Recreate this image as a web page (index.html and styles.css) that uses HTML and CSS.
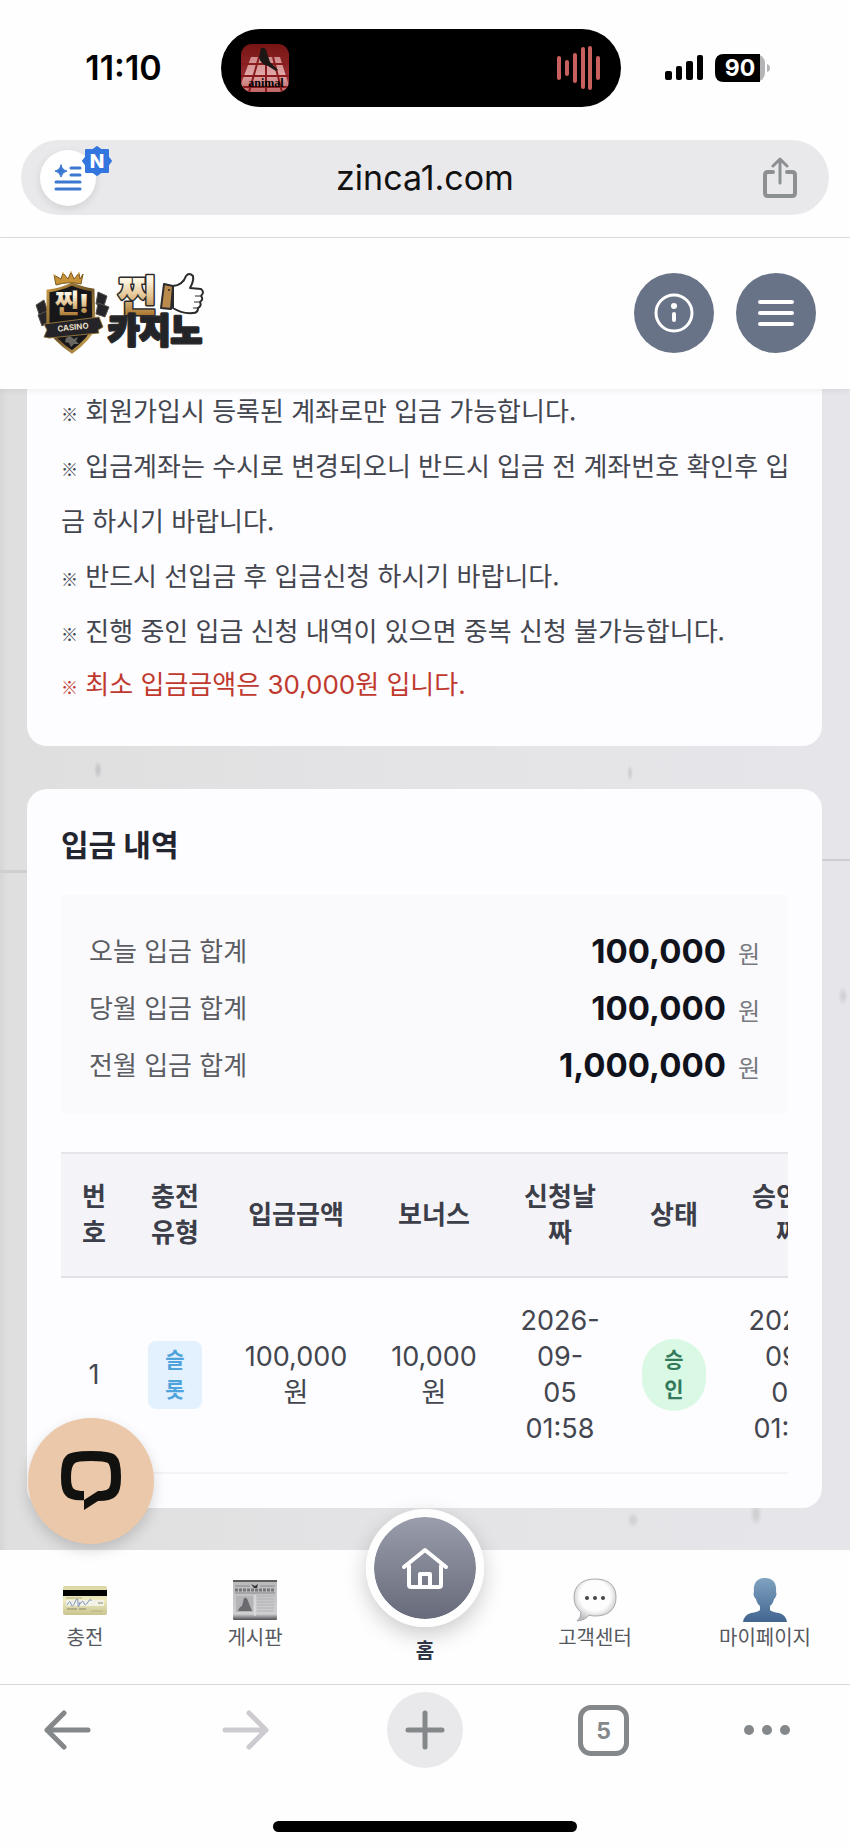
FILE: index.html
```html
<!DOCTYPE html>
<html lang="ko">
<head>
    <meta charset="UTF-8">
    <meta name="viewport" content="width=device-width, initial-scale=1.0">
    <title>입금 내역</title>
    <link rel="stylesheet" href="styles.css">
</head>
<body>
    <div class="status-bar">
        <div class="status-time">11:10</div>
        <div class="island">
            <svg width="48" height="48" viewBox="0 0 48 48">
                <defs>
                    <linearGradient id="cover" x1="0" y1="0" x2="0" y2="1">
                        <stop offset="0" stop-color="#761414"/>
                        <stop offset="1" stop-color="#a83a3c"/>
                    </linearGradient>
                    <linearGradient id="tiles" x1="0" y1="0" x2="0" y2="1">
                        <stop offset="0" stop-color="#cf8a8a"/>
                        <stop offset="0.5" stop-color="#e0a6a6"/>
                        <stop offset="1" stop-color="#c06466"/>
                    </linearGradient>
                    <clipPath id="coverClip"><rect width="48" height="48" rx="11"/></clipPath>
                </defs>
                <g clip-path="url(#coverClip)">
                    <rect width="48" height="48" fill="url(#cover)"/>
                    <path d="M10 13H39L50 48H-3Z" fill="url(#tiles)"/>
                    <path d="M0 20H48M0 32H48M0 43H48M18 13L8 48M25 13V48M32 13L41 48" stroke="#8a1c1e" stroke-width="2" fill="none"/>
                    <path d="M20 4q5-1 6 5l3 9 8 8-2 1-8-5q-8-2-9-9z" fill="#1c1614"/>
                    <text class="cover-text" x="25" y="43" text-anchor="middle">animal</text>
                </g>
            </svg>
            <svg width="44" height="46" viewBox="0 0 44 46" stroke="#c8605d" stroke-width="4" stroke-linecap="round">
                <path d="M2 13V33M10 17V29M18 10V36M26 4V42M33 3V43M41 13V33"/>
            </svg>
        </div>
        <div class="status-icons">
            <svg width="40" height="26" viewBox="0 0 40 26">
                <rect x="0" y="16" width="7" height="9" rx="2"/>
                <rect x="11" y="11" width="6" height="14" rx="2"/>
                <rect x="21" y="6" width="7" height="19" rx="2"/>
                <rect x="32" y="0" width="6" height="25" rx="2"/>
            </svg>
            <svg width="56" height="28" viewBox="0 0 56 28">
                <rect width="50" height="28" rx="9" fill="#b4b4b6"/>
                <path d="M9 0H45V28H9Q0 28 0 19V9Q0 0 9 0Z"/>
                <path d="M52 10Q55 11 55 14Q55 17 52 18Z" fill="#b4b4b6"/>
                <text class="battery-text" x="25" y="22" text-anchor="middle">90</text>
            </svg>
        </div>
    </div>

    <div class="address-row">
        <div class="address-bar">
            <button class="reader-button" aria-label="읽기 모드">
                <svg width="28" height="28" viewBox="0 0 28 28" fill="none" stroke="#3c78cf" stroke-width="3" stroke-linecap="round">
                    <path d="M17 4H26M17 11H26M2 18H26M2 25H26"/>
                    <path d="M7 1Q8 6 13 7Q8 8 7 13Q6 8 1 7Q6 6 7 1Z" fill="#3c78cf" stroke="#3c78cf" stroke-width="1"/>
                </svg>
                <svg class="new-badge" width="30" height="30" viewBox="0 0 30 30">
                    <path d="M15 1L19 4H26V11L29 15L26 19V26H19L15 29L11 26H4V19L1 15L4 11V4H11Z" fill="#3376e0" stroke="#3376e0" stroke-width="2" stroke-linejoin="round"/>
                    <text x="15" y="22" text-anchor="middle">N</text>
                </svg>
            </button>
            <span class="address-text">zinca1.com</span>
            <button class="share-button" aria-label="공유">
                <svg width="36" height="42" viewBox="0 0 36 42" fill="none" stroke="#8d9093" stroke-width="4" stroke-linecap="round" stroke-linejoin="round">
                    <path d="M11 15H6Q3 15 3 18V36Q3 39 6 39H30Q33 39 33 36V18Q33 15 30 15H25"/>
                    <path d="M18 26V3M11 9L18 2L25 9" stroke-width="3"/>
                </svg>
            </button>
        </div>
    </div>

    <header class="site-header">
        <a href="#" class="logo" aria-label="찐카지노">
            <svg width="170" height="84" viewBox="0 0 170 84">
                <defs>
                    <linearGradient id="gold" x1="0" y1="0" x2="0" y2="1">
                        <stop offset="0.2" stop-color="#fff6e2"/>
                        <stop offset="0.5" stop-color="#e3c594"/>
                        <stop offset="0.9" stop-color="#a8742c"/>
                    </linearGradient>
                    <linearGradient id="rim" x1="0" y1="0" x2="1" y2="1">
                        <stop offset="0" stop-color="#c99b45"/>
                        <stop offset="0.5" stop-color="#6f5325"/>
                        <stop offset="1" stop-color="#e0b860"/>
                    </linearGradient>
                </defs>
                <g fill="#26262a" stroke="#57534c">
                    <path d="M1 34L9 29L14 44L6 49Z"/>
                    <path d="M3 44L12 40V52L7 55Z"/>
                    <path d="M63 21L72 25L69 35L61 33Z"/>
                    <path d="M63 32L74 36L70 46L61 43Z"/>
                </g>
                <path d="M37 13Q49 18 58 19L59 56Q55 68 37 81Q18 68 13 56V20Q27 18 37 13Z" fill="#17171a" stroke="url(#rim)" stroke-width="3"/>
                <path d="M21 14L19 4L26 8L28 2L33 8L36 1L39 8L44 2L45 8L48 3L46 13Q34 10 21 14Z" fill="#c89239" stroke="#7c5a20"/>
                <g fill="#e9c97d"><circle cx="19" cy="4" r="1"/><circle cx="28" cy="2" r="1"/><circle cx="36" cy="1" r="1"/><circle cx="44" cy="2" r="1"/></g>
                <text class="logo-shield" x="37" y="42" text-anchor="middle">찐!</text>
                <path d="M9 53L64 46L68 56L63 59L64 62L14 67L9 66L12 59Z" fill="#242327" stroke="#8d713c"/>
                <text class="logo-casino" x="38" y="59" text-anchor="middle" transform="rotate(-6 38 57)">CASINO</text>
                <path d="M31 67l4-2 4 3 4-2-2 4 3 3-5 0-3 3-2-4-4-1z" fill="#696762"/>
                <text class="logo-word-gold" x="102" y="40" text-anchor="middle">찐</text>
                <path d="M138 15Q148 14 151 5Q154 1 158 5Q159 10 155 17L166 18Q170 21 166 25Q169 28 165 31Q167 35 163 37Q163 42 158 42Q147 43 138 37Z" fill="#fff" stroke="#2b2b2d" stroke-width="2" stroke-linejoin="round"/>
                <path d="M160 25h5M159 31h5M158 37h4" stroke="#2b2b2d"/>
                <path d="M129 13L138 15L136 38L126 37Z" fill="#bb8b4d" stroke="#2b2b2d" stroke-width="2" stroke-linejoin="round"/>
                <circle cx="134" cy="19" r="1" fill="#222"/>
                <text class="logo-word" x="120" y="72" text-anchor="middle">카지노</text>
            </svg>
        </a>
        <div class="header-buttons">
            <button class="round-button" aria-label="안내">
                <svg width="40" height="40" viewBox="0 0 40 40" fill="none" stroke="#fff" stroke-width="3" stroke-linecap="round">
                    <circle cx="20" cy="20" r="18"/>
                    <path d="M20 21V27" stroke-width="4"/>
                    <circle cx="20" cy="13" r="3" fill="#fff" stroke="none"/>
                </svg>
            </button>
            <button class="round-button" aria-label="메뉴">
                <svg width="36" height="26" viewBox="0 0 36 26" stroke="#fff" stroke-width="4" stroke-linecap="round">
                    <path d="M2 2H34M2 13H34M2 24H34"/>
                </svg>
            </button>
        </div>
    </header>

    <main class="content">
        <section class="card notes">
            <p><span class="mark">※</span> 회원가입시 등록된 계좌로만 입금 가능합니다.</p>
            <p><span class="mark">※</span> 입금계좌는 수시로 변경되오니 반드시 입금 전 계좌번호 확인후 입금 하시기 바랍니다.</p>
            <p><span class="mark">※</span> 반드시 선입금 후 입금신청 하시기 바랍니다.</p>
            <p><span class="mark">※</span> 진행 중인 입금 신청 내역이 있으면 중복 신청 불가능합니다.</p>
            <p class="warning"><span class="mark">※</span> 최소 입금금액은 30,000원 입니다.</p>
        </section>

        <section class="card history">
            <h2>입금 내역</h2>
            <dl class="summary">
                <div class="summary-row"><dt>오늘 입금 합계</dt><dd>100,000 <span>원</span></dd></div>
                <div class="summary-row"><dt>당월 입금 합계</dt><dd>100,000 <span>원</span></dd></div>
                <div class="summary-row"><dt>전월 입금 합계</dt><dd>1,000,000 <span>원</span></dd></div>
            </dl>
            <div class="table-scroll">
                <table>
                    <colgroup>
                        <col class="col-no"><col class="col-type"><col class="col-amount"><col class="col-bonus">
                        <col class="col-date"><col class="col-state"><col class="col-date">
                    </colgroup>
                    <thead>
                        <tr>
                            <th>번호</th>
                            <th>충전<br>유형</th>
                            <th>입금금액</th>
                            <th>보너스</th>
                            <th>신청날짜</th>
                            <th>상태</th>
                            <th>승인날짜</th>
                        </tr>
                    </thead>
                    <tbody>
                        <tr>
                            <td>1</td>
                            <td><span class="tag">슬<br>롯</span></td>
                            <td>100,000<br>원</td>
                            <td>10,000<br>원</td>
                            <td>2026-<br>09-<br>05<br>01:58</td>
                            <td><span class="tag approved">승<br>인</span></td>
                            <td>2026-<br>09-<br>05<br>01:58</td>
                        </tr>
                    </tbody>
                </table>
            </div>
        </section>
    </main>

    <nav class="tab-bar">
        <button class="chat-button" aria-label="채팅 상담">
            <svg width="60" height="60" viewBox="0 0 60 60">
                <path d="M5 5Q9 0 30 0Q51 0 55 5Q60 9 60 26Q60 41 55 45Q51 50 37 50L23 59V40H24V49Q9 50 5 45Q0 41 0 26Q0 9 5 5Z" fill="#11110f"/>
                <path d="M14 12Q16 10 30 10Q44 10 47 12Q50 15 50 26Q50 36 47 38Q44 40 37 40L23 49V40Q16 40 13 38Q10 36 10 26Q10 15 14 12Z" fill="#ebc8a9"/>
            </svg>
        </button>
        <a href="#" class="tab">
            <svg width="44" height="44" viewBox="0 0 44 44">
                <defs>
                    <linearGradient id="cardFace" x1="0" y1="0" x2="0" y2="1">
                        <stop offset="0" stop-color="#dcd6a4"/>
                        <stop offset="0.5" stop-color="#eee9bf"/>
                        <stop offset="1" stop-color="#c9c48e"/>
                    </linearGradient>
                </defs>
                <rect y="8" width="44" height="29" rx="2" fill="url(#cardFace)"/>
                <rect y="12" width="44" height="6" fill="#000"/>
                <rect x="3" y="22" width="38" height="6" fill="#f2f1e6"/>
                <path d="M4 27q3-6 4-1t4-2 3 1 2-1M17 26q3-5 4-1t4-1 3-1" fill="none" stroke="#7f94bd"/>
                <path d="M35 25h5M4 31h10M16 31h7" stroke="#8a8768"/>
                <path d="M3 20h16M28 33h12" stroke="#b6b184"/>
            </svg>
            <span>충전</span>
        </a>
        <a href="#" class="tab">
            <svg width="44" height="44" viewBox="0 0 44 44">
                <defs>
                    <linearGradient id="paper" x1="0" y1="0" x2="0" y2="1">
                        <stop offset="0" stop-color="#b9b9bb"/>
                        <stop offset="0.85" stop-color="#cfcfd1"/>
                        <stop offset="1" stop-color="#4f4f53"/>
                    </linearGradient>
                </defs>
                <rect y="2" width="44" height="40" rx="1" fill="url(#paper)"/>
                <path d="M0 3H44" stroke="#5d5d60" stroke-width="2"/>
                <path d="M2 8H17M27 8H42M2 15H42" stroke="#88888b"/>
                <path d="M18 6l4 2 3-2-1 4-3 0z" fill="#333"/>
                <path d="M2 12H42" stroke="#77777a" stroke-width="3" stroke-dasharray="3 1"/>
                <rect x="3" y="18" width="17" height="16" fill="#b4b4b7"/>
                <path d="M5 33q1-4 4-5l2-8q3-1 4 3l2 5q1 2 2 5z" fill="#6b6b6f"/>
                <path d="M24 18H41M24 21H41M24 24H41M24 27H41M24 30H41M24 33H41" stroke="#b2b2b5"/>
                <path d="M22 17V38" stroke="#e6e6e8"/>
            </svg>
            <span>게시판</span>
        </a>
        <a href="#" class="tab home-tab">
            <span class="home-circle">
                <svg width="48" height="44" viewBox="0 0 48 44" fill="none" stroke="#fff" stroke-width="4" stroke-linecap="round" stroke-linejoin="round">
                    <path d="M3 21L24 4L45 21M8 20V39Q8 41 10 41H38Q40 41 40 39V20"/>
                    <path d="M19 40V28H29V40"/>
                </svg>
            </span>
            <span>홈</span>
        </a>
        <a href="#" class="tab">
            <svg width="44" height="44" viewBox="0 0 44 44">
                <defs>
                    <radialGradient id="bubble" cx="0.5" cy="0.4" r="0.6">
                        <stop offset="0.6" stop-color="#fdfdfd"/>
                        <stop offset="1" stop-color="#bdbdc1"/>
                    </radialGradient>
                </defs>
                <path d="M22 1C36 1 43 8 43 19C43 31 36 38 22 38Q19 38 16 37Q13 42 4 43Q8 40 8 34Q1 29 1 19C1 8 9 1 22 1Z" fill="url(#bubble)" stroke="#a9a9ad"/>
                <g fill="#444"><circle cx="14" cy="20" r="2"/><circle cx="22" cy="20" r="2"/><circle cx="30" cy="20" r="2"/></g>
            </svg>
            <span>고객센터</span>
        </a>
        <a href="#" class="tab">
            <svg width="44" height="44" viewBox="0 0 44 44">
                <defs>
                    <linearGradient id="person" x1="0" y1="0" x2="0" y2="1">
                        <stop offset="0" stop-color="#80a3c1"/>
                        <stop offset="1" stop-color="#41658f"/>
                    </linearGradient>
                </defs>
                <path d="M22 0C30 0 34 5 33 14Q34 15 33 18Q32 21 31 21Q30 26 27 28V32Q29 34 36 35Q43 37 44 44H0Q1 37 8 35Q15 34 17 32V28Q14 26 13 21Q12 21 11 18Q10 15 11 14C10 5 14 0 22 0Z" fill="url(#person)"/>
            </svg>
            <span>마이페이지</span>
        </a>
    </nav>

    <footer class="browser-bar">
        <div class="browser-buttons">
            <button class="back" aria-label="뒤로">
                <svg width="48" height="40" viewBox="0 0 48 40"><path d="M45 20H4M21 3L4 20L21 37"/></svg>
            </button>
            <button class="forward" aria-label="앞으로">
                <svg width="48" height="40" viewBox="0 0 48 40"><path d="M3 20H44M27 3L44 20L27 37"/></svg>
            </button>
            <button class="new-tab" aria-label="새 탭">
                <svg width="40" height="40" viewBox="0 0 40 40"><path d="M3 20H37M20 3V37"/></svg>
            </button>
            <button aria-label="탭 5개"><span class="tab-count">5</span></button>
            <button class="more" aria-label="더보기">
                <svg width="48" height="12" viewBox="0 0 48 12"><circle cx="6" cy="6" r="5"/><circle cx="24" cy="6" r="5"/><circle cx="42" cy="6" r="5"/></svg>
            </button>
        </div>
        <div class="home-indicator"></div>
    </footer>
</body>
</html>
```
FILE: styles.css
```css
* {
    box-sizing: border-box;
}
body {
    margin: 0;
    background-color: #fefefe;
    color: #43464f;
    font-family: Inter, "Noto Sans CJK KR", sans-serif;
    font-size: 26px;
    line-height: 36px;
}
button {
    padding: 0;
    border: none;
    background: none;
    font-family: inherit;
    cursor: pointer;
}
a {
    color: inherit;
    text-decoration: none;
}
svg {
    display: block;
}

/* status bar */
.status-bar {
    display: grid;
    grid-template-columns: 1fr 400px 1fr;
    align-items: center;
    padding: 29px 8px 33px 0;
}
.status-time {
    padding-left: 26px;
    color: #000;
    font-size: 34px;
    font-weight: 600;
    text-align: center;
}
.island {
    display: flex;
    align-items: center;
    justify-content: space-between;
    height: 78px;
    padding: 0 20px;
    border-radius: 39px;
    background-color: #000;
}
.cover-text {
    font-family: "Liberation Serif", serif;
    font-size: 12px;
    font-weight: bold;
}
.status-icons {
    display: flex;
    align-items: center;
    justify-content: center;
    gap: 10px;
    padding-right: 28px;
}
.battery-text {
    fill: #fff;
    font-size: 23px;
    font-weight: 700;
}

/* address bar */
.address-row {
    padding: 0 21px 22px;
    border-bottom: 1px solid #dedee0;
}
.address-bar {
    display: grid;
    grid-template-columns: 56px 1fr 56px;
    align-items: center;
    height: 75px;
    padding: 0 19px;
    border-radius: 38px;
    background-color: #e9e8eb;
}
.reader-button {
    position: relative;
    display: flex;
    align-items: center;
    justify-content: center;
    width: 56px;
    height: 56px;
    border-radius: 50%;
    background-color: #fff;
    box-shadow: 0 3px 8px rgba(0, 0, 0, 0.1);
}
.new-badge {
    position: absolute;
    top: -4px;
    right: -16px;
}
.new-badge text {
    fill: #fff;
    font-size: 19px;
    font-weight: 800;
}
.address-text {
    color: #111;
    font-size: 34px;
    text-align: center;
}
.share-button {
    justify-self: end;
    margin-right: 12px;
}

/* site header */
.site-header {
    position: relative;
    z-index: 2;
    display: flex;
    align-items: center;
    justify-content: space-between;
    height: 151px;
    padding: 0 34px 2px 35px;
    background-color: #fefefe;
    box-shadow: 0 2px 6px rgba(0, 0, 0, 0.06);
}
.logo-shield {
    fill: url(#gold);
    font-size: 26px;
    font-weight: 900;
}
.logo-casino {
    fill: #e8dfc9;
    font-size: 8px;
    font-weight: 700;
}
.logo-word-gold,
.logo-word {
    font-size: 42px;
    font-weight: 900;
    stroke: #2b2b2d;
    stroke-width: 3;
    stroke-linejoin: round;
    paint-order: stroke;
}
.logo-word-gold {
    fill: url(#gold);
}
.logo-word {
    fill: #232427;
    font-size: 34px;
}
.header-buttons {
    display: flex;
    gap: 22px;
}
.round-button {
    display: flex;
    align-items: center;
    justify-content: center;
    width: 80px;
    height: 80px;
    border-radius: 50%;
    background-color: #687387;
}

/* page content */
.content {
    padding: 0 28px 42px 27px;
    background:
        radial-gradient(ellipse 4px 9px at 98px 388px, #c9c8cb 40%, transparent),
        radial-gradient(ellipse 3px 8px at 630px 391px, #d0cfd2 40%, transparent),
        radial-gradient(ellipse 5px 9px at 843px 614px, #d2d1d5 30%, transparent),
        radial-gradient(ellipse 6px 12px at 756px 1132px, #d0cfd2 30%, transparent),
        radial-gradient(ellipse 6px 8px at 633px 1138px, #d2d1d4 30%, transparent),
        linear-gradient(#cfced2, #cfced2) right 477px / 28px 2px no-repeat,
        linear-gradient(#cfcfd0, #cfcfd0) left 488px / 27px 3px no-repeat,
        linear-gradient(90deg, #d6d6d6, #dfdfdf 8px, #e0dfe0 24px, #e4e3e5 50%, #e6e5ea);
}
.card {
    padding: 34px;
    border-radius: 20px;
    background-color: #fdfcfe;
}
.notes {
    margin-top: -7px;
    padding-top: 0;
    padding-right: 30px;
    border-radius: 0 0 20px 20px;
    font-family: "Noto Sans CJK KR", sans-serif;
    line-height: 55px;
    word-break: break-all;
}
.notes p {
    margin: 0;
}
.notes .mark {
    font-family: "Noto Sans CJK KR", sans-serif;
    font-size: 17px;
    font-weight: 700;
    line-height: 1;
}
.notes .warning {
    color: #c0392f;
    font-family: Inter, "Noto Sans CJK KR", sans-serif;
}
.history {
    margin-top: 43px;
}
.history h2 {
    margin: 0;
    color: #22252f;
    font-size: 30px;
    font-weight: 700;
    line-height: 44px;
}
.summary {
    margin: 28px 0 38px;
    padding: 28px 28px 20px;
    border-radius: 4px;
    background-color: #fafafd;
}
.summary-row {
    display: flex;
    align-items: center;
    justify-content: space-between;
    line-height: 57px;
}
.summary dt {
    color: #5b5d63;
}
.summary dd {
    display: flex;
    align-items: baseline;
    gap: 12px;
    margin: 0;
    color: #11131c;
    font-size: 33px;
    font-weight: 700;
}
.summary dd span {
    color: #77797f;
    font-size: 24px;
    font-weight: 400;
    line-height: 1;
}

/* history table */
.table-scroll {
    overflow: hidden;
}
table {
    width: 788px;
    table-layout: fixed;
    border-collapse: collapse;
    text-align: center;
}
.col-no {
    width: 66px;
}
.col-type {
    width: 96px;
}
.col-amount {
    width: 146px;
}
.col-bonus {
    width: 130px;
}
.col-date {
    width: 122px;
}
.col-state {
    width: 106px;
}
thead {
    border-top: 2px solid #e6e6e9;
    border-bottom: 2px solid #e0e1e5;
    background-color: #f4f4f8;
}
tbody tr {
    border-bottom: 2px solid #f3f3f5;
}
th,
td {
    padding: 25px 20px;
    vertical-align: middle;
}
th {
    color: #3c3f49;
    font-weight: 700;
}
td {
    font-size: 27px;
}
.tag {
    display: inline-block;
    padding: 4px 17px;
    border-radius: 8px;
    background-color: #e2f1fd;
    color: #4fa3dc;
    font-size: 21px;
    font-weight: 600;
    line-height: 30px;
    vertical-align: middle;
}
.tag.approved {
    padding: 6px 22px;
    border-radius: 36px;
    background-color: #d9f9e5;
    color: #33795a;
}

/* tab bar */
.tab-bar {
    position: relative;
    z-index: 2;
    display: grid;
    grid-template-columns: repeat(5, 1fr);
    height: 135px;
    border-bottom: 1px solid #d9d9dc;
    background-color: #fefefe;
    color: #55585f;
    font-size: 20px;
    line-height: 28px;
}
.tab {
    display: flex;
    flex-direction: column;
    align-items: center;
    gap: 2px;
    padding-top: 28px;
}
.home-tab {
    gap: 10px;
    margin-top: -41px;
    padding-top: 0;
    color: #2d3448;
    font-weight: 700;
}
.home-circle {
    display: flex;
    align-items: center;
    justify-content: center;
    width: 118px;
    height: 118px;
    border: 8px solid #fefefe;
    border-radius: 50%;
    background: linear-gradient(#9a9dab, #666a7a) padding-box;
    box-shadow: 0 8px 22px rgba(0, 0, 0, 0.2);
}
.chat-button {
    position: absolute;
    top: -132px;
    left: 28px;
    display: flex;
    align-items: center;
    justify-content: center;
    width: 126px;
    height: 126px;
    border-radius: 50%;
    background-color: #ebc8a9;
    box-shadow: 0 6px 14px rgba(0, 0, 0, 0.16);
}

/* browser toolbar */
.browser-bar {
    padding: 7px 0 17px;
}
.browser-buttons {
    display: grid;
    grid-template-columns: 114px 1fr 1fr 1fr 98px;
    justify-items: center;
    padding: 0 59px 0 43px;
}
.browser-buttons button {
    display: flex;
    align-items: center;
    justify-content: center;
    height: 76px;
}
.browser-buttons .back {
    justify-self: start;
}
.browser-buttons .more {
    justify-self: end;
}
.browser-buttons path {
    fill: none;
    stroke: #85888b;
    stroke-width: 5;
    stroke-linecap: round;
    stroke-linejoin: round;
}
.browser-buttons circle {
    fill: #85888b;
}
.browser-buttons .forward path {
    stroke: #cdcbcf;
}
.browser-buttons .new-tab {
    width: 76px;
    border-radius: 50%;
    background-color: #e9e9ec;
}
.tab-count {
    width: 51px;
    height: 51px;
    border: 5px solid #85888b;
    border-radius: 13px;
    color: #85888b;
    font-size: 23px;
    font-weight: 700;
    line-height: 42px;
}
.home-indicator {
    width: 304px;
    height: 11px;
    margin: 53px auto 0;
    border-radius: 6px;
    background-color: #000;
}
```
